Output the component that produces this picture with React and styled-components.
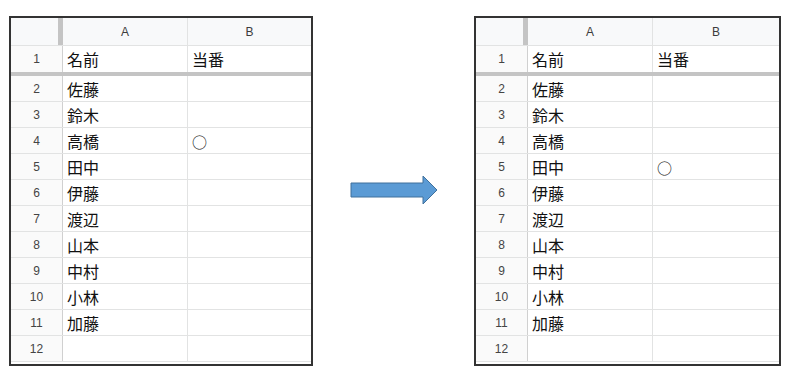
import React from "react";
import styled, { createGlobalStyle } from "styled-components";

const names = ["佐藤", "鈴木", "高橋", "田中", "伊藤", "渡辺", "山本", "中村", "小林", "加藤", ""];

const GlobalStyle = createGlobalStyle`
    body{
        margin: 0;
        background: #ffffff;
        font-family: "Liberation Sans", Arial, sans-serif;
    }
`;

const Sheet = ({ width, mark }) => {
    return (
        <Frame width={width}>
            <HeadRow>
                <Corner />
                <ColHead>A</ColHead>
                <ColHead last>B</ColHead>
            </HeadRow>
            <Row frozen>
                <RowNum>1</RowNum>
                <Cell>名前</Cell>
                <Cell last>当番</Cell>
            </Row>
            {names.map((name, i) => (
                <Row key={i}>
                    <RowNum>{i + 2}</RowNum>
                    <Cell>{name}</Cell>
                    <Cell last>{i + 2 === mark ? <Mark>○</Mark> : ""}</Cell>
                </Row>
            ))}
        </Frame>
    );
};

const Arrow = () => (
    <ArrowBox>
        <svg width="89" height="30" viewBox="0 0 89 30">
            <path d="M1 8 H73 V1 L87 15 L73 29 V22 H1 Z" fill="#5b9bd5" stroke="#41719c" strokeWidth="1" />
        </svg>
    </ArrowBox>
);

const App = () => {
    return (
        <Page>
            <GlobalStyle />
            <Sheet width={304} mark={4} />
            <Arrow />
            <Sheet width={307} mark={5} />
        </Page>
    );
};

// Styled Components
const Page = styled.div`
    display: flex;
    align-items: flex-start;
    padding: 16px 0 0 9px;
`;
const Frame = styled.div`
    box-sizing: border-box;
    width: ${(p) => p.width}px;
    height: 350px;
    border: 2px solid #333333;
    overflow: hidden;
    background: #ffffff;
`;
const HeadRow = styled.div`
    display: grid;
    grid-template-columns: 52px 125px 1fr;
    height: 28px;
    background: #f8f9fa;
    border-bottom: 1px solid #e2e3e3;
    box-sizing: border-box;
`;
const Corner = styled.div`
    border-right: 5px solid #c4c4c4;
    box-sizing: border-box;
    width: 52px;
`;
const ColHead = styled.div`
    display: flex;
    align-items: center;
    justify-content: center;
    font-size: 12px;
    color: #3c3c3c;
    border-right: ${(p) => (p.last ? "none" : "1px solid #e2e3e3")};
`;
const Row = styled.div`
    display: grid;
    grid-template-columns: 52px 125px 1fr;
    height: ${(p) => (p.frozen ? 30 : 26)}px;
    box-sizing: border-box;
    border-bottom: ${(p) => (p.frozen ? "4px solid #c4c4c4" : "1px solid #e2e3e3")};
`;
const RowNum = styled.div`
    display: flex;
    align-items: center;
    justify-content: center;
    font-size: 12px;
    color: #444444;
    background: #fafafa;
    border-right: 1px solid #d0d0d0;
`;
const Cell = styled.div`
    display: flex;
    align-items: center;
    padding-left: 4px;
    font-family: "Noto Sans CJK JP", "Noto Sans", sans-serif;
    font-size: 16px;
    color: #111111;
    border-right: ${(p) => (p.last ? "none" : "1px solid #e2e3e3")};
    white-space: nowrap;
`;
const Mark = styled.span`
    font-size: 15px;
    margin-top: 2px;
`;
const ArrowBox = styled.div`
    margin: 159px 35px 0 37px;
    line-height: 0;
`;

export default App;
